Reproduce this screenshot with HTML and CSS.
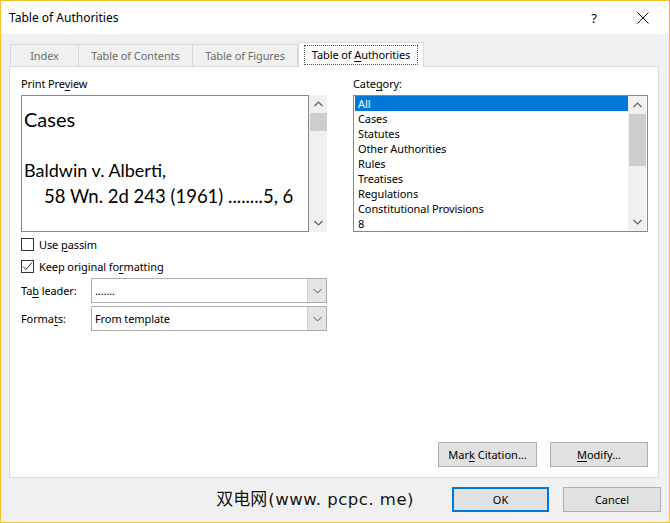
FILE: index.html
```html
<!DOCTYPE html>
<html lang="en">
<head>
    <meta charset="UTF-8">
    <title>Table of Authorities</title>
    <link rel="stylesheet" href="styles.css">
</head>
<body>
    <div class="window">
        <div class="titlebar">
            <span class="title">Table of Authorities</span>
            <span class="help">?</span>
            <span class="close">
                <svg width="12" height="12" viewBox="0 0 12 12"><path d="M0.5 0.5 L11.5 11.5 M11.5 0.5 L0.5 11.5" stroke="#111" stroke-width="1"/></svg>
            </span>
        </div>

        <div class="content">
            <div class="tabs">
                <div class="tab tab-index">Index</div>
                <div class="tab tab-toc">Table of Contents</div>
                <div class="tab tab-tof">Table of Figures</div>
                <div class="tab tab-active"><span class="focus">Table of <u>A</u>uthorities</span></div>
            </div>

            <div class="panel">
                <div class="columns">
                    <div class="left">
                        <div class="label">Print Pre<u>v</u>iew</div>
                        <div class="preview-row">
                            <div class="preview">
                                <div class="pv-head">Cases</div>
                                <div class="pv-case">Baldwin v. Alberti,</div>
                                <div class="pv-cite">58 Wn. 2d 243 (1961) ........5, 6</div>
                            </div>
                            <div class="scrollbar">
                                <svg class="arrow" width="9" height="6" viewBox="0 0 9 6"><path d="M0.5 5 L4.5 1 L8.5 5" fill="none" stroke="#606060" stroke-width="1.2"/></svg>
                                <div class="thumb thumb-preview"></div>
                                <div class="spacer"></div>
                                <svg class="arrow" width="9" height="6" viewBox="0 0 9 6"><path d="M0.5 1 L4.5 5 L8.5 1" fill="none" stroke="#606060" stroke-width="1.2"/></svg>
                            </div>
                        </div>

                        <label class="check">
                            <span class="box"></span>
                            <span>Use <u>p</u>assim</span>
                        </label>
                        <label class="check check-two">
                            <span class="box">
                                <svg width="11" height="11" viewBox="0 0 11 11"><path d="M1 5.5 L4 8.5 L10 1.5" fill="none" stroke="#222" stroke-width="1"/></svg>
                            </span>
                            <span>Keep original fo<u>r</u>matting</span>
                        </label>

                        <div class="field">
                            <span class="field-label">Ta<u>b</u> leader:</span>
                            <div class="combo">
                                <span class="combo-text">.......</span>
                                <span class="combo-btn"><svg width="9" height="6" viewBox="0 0 9 6"><path d="M0.5 1 L4.5 5 L8.5 1" fill="none" stroke="#505050" stroke-width="1"/></svg></span>
                            </div>
                        </div>
                        <div class="field field-two">
                            <span class="field-label">Forma<u>t</u>s:</span>
                            <div class="combo">
                                <span class="combo-text">From template</span>
                                <span class="combo-btn"><svg width="9" height="6" viewBox="0 0 9 6"><path d="M0.5 1 L4.5 5 L8.5 1" fill="none" stroke="#505050" stroke-width="1"/></svg></span>
                            </div>
                        </div>
                    </div>

                    <div class="right">
                        <div class="label">Cate<u>g</u>ory:</div>
                        <div class="listbox">
                            <div class="items">
                                <div class="item selected">All</div>
                                <div class="item">Cases</div>
                                <div class="item">Statutes</div>
                                <div class="item">Other Authorities</div>
                                <div class="item">Rules</div>
                                <div class="item">Treatises</div>
                                <div class="item">Regulations</div>
                                <div class="item">Constitutional Provisions</div>
                                <div class="item">8</div>
                            </div>
                            <div class="scrollbar list-scroll">
                                <svg class="arrow" width="9" height="6" viewBox="0 0 9 6"><path d="M0.5 5 L4.5 1 L8.5 5" fill="none" stroke="#606060" stroke-width="1.2"/></svg>
                                <div class="thumb thumb-list"></div>
                                <div class="spacer"></div>
                                <svg class="arrow" width="9" height="6" viewBox="0 0 9 6"><path d="M0.5 1 L4.5 5 L8.5 1" fill="none" stroke="#606060" stroke-width="1.2"/></svg>
                            </div>
                        </div>
                    </div>
                </div>

                <div class="panel-buttons">
                    <button class="btn btn-mark">Mar<u>k</u> Citation...</button>
                    <button class="btn btn-modify"><u>M</u>odify...</button>
                </div>
            </div>

            <div class="footer">
                <span class="watermark">双电网<span class="wm-latin">(www. pcpc. me)</span></span>
                <button class="btn btn-ok">OK</button>
                <button class="btn btn-cancel">Cancel</button>
            </div>
        </div>
    </div>
</body>
</html>
```

FILE: styles.css
```css
html, body {
    margin: 0;
    padding: 0;
}
body {
    font-family: "Noto Sans", "Liberation Sans", sans-serif;
    font-size: 11px;
    letter-spacing: -0.1px;
    color: #000;
    background: #f0f0f0;
}
u {
    text-decoration-thickness: 1px;
    text-underline-offset: 2px;
}
.window {
    width: 670px;
    height: 523px;
    box-sizing: border-box;
    border: 1px solid #f2c12e;
    background: #f0f0f0;
    display: flex;
    flex-direction: column;
}
.titlebar {
    height: 33px;
    background: #fff;
    display: flex;
    align-items: center;
    padding-left: 8px;
}
.title {
    font-size: 12px;
    letter-spacing: 0;
    flex: 1;
}
.help {
    font-size: 13px;
    width: 20px;
    margin-right: 33px;
    text-align: center;
}
.close {
    width: 12px;
    height: 12px;
    margin-right: 20px;
    display: flex;
}
.content {
    flex: 1;
    display: flex;
    flex-direction: column;
    padding: 8px 8px 0 8px;
}
.tabs {
    display: flex;
    align-items: flex-end;
    height: 24px;
    margin-left: 1px;
}
.tab {
    height: 22px;
    box-sizing: border-box;
    border: 1px solid #d9d9d9;
    border-bottom: none;
    border-right: none;
    color: #6d6d6d;
    display: flex;
    align-items: center;
    justify-content: center;
    padding-bottom: 1px;
}
.tab-index { width: 68px; }
.tab-toc { width: 114px; }
.tab-tof { width: 106px; border-right: 1px solid #d9d9d9; }
.tab-active {
    width: 126px;
    height: 25px;
    margin-bottom: -1px;
    background: #fff;
    color: #000;
    border-right: 1px solid #d9d9d9;
    position: relative;
    z-index: 1;
    padding-bottom: 1px;
}
.focus {
    border: 1px dotted #555;
    padding: 1px 7px 2px 7px;
}
.panel {
    height: 412px;
    margin-right: 2px;
    box-sizing: border-box;
    border: 1px solid #d9d9d9;
    background: #fff;
    padding: 10px 10px 10px 11px;
    display: flex;
    flex-direction: column;
}
.columns {
    display: flex;
    flex: 1;
}
.left {
    width: 306px;
}
.right {
    width: 296px;
    margin-left: 26px;
}
.label {
    height: 18px;
    line-height: 14px;
}
.preview-row {
    display: flex;
    height: 137px;
}
.preview {
    width: 288px;
    box-sizing: border-box;
    border: 1px solid #828790;
    font-family: "Lato", "Open Sans", sans-serif;
    font-size: 18px;
    letter-spacing: 0;
    padding: 11px 0 0 2px;
}
.pv-head {
    line-height: 25px;
    font-size: 20px;
}
.pv-case {
    margin-top: 25px;
    line-height: 26px;
}
.pv-cite {
    padding-left: 20px;
    line-height: 26px;
    font-size: 18.5px;
}
.scrollbar {
    width: 18px;
    background: #f0f0f0;
    display: flex;
    flex-direction: column;
    align-items: center;
}
.arrow {
    margin: 6px 0;
}
.thumb {
    width: 17px;
    background: #cdcdcd;
}
.thumb-preview {
    height: 18px;
}
.thumb-list {
    height: 52px;
}
.spacer {
    flex: 1;
}
.check {
    display: flex;
    align-items: center;
    height: 13px;
    margin-top: 6px;
}
.check-two {
    margin-top: 9px;
}
.box {
    width: 13px;
    height: 13px;
    box-sizing: border-box;
    border: 1px solid #333;
    margin-right: 5px;
    display: flex;
    align-items: center;
    justify-content: center;
}
.field {
    display: flex;
    align-items: center;
    margin-top: 5px;
}
.field-two {
    margin-top: 3px;
}
.field-label {
    width: 70px;
}
.combo {
    width: 236px;
    height: 25px;
    box-sizing: border-box;
    border: 1px solid #adadad;
    display: flex;
    align-items: center;
}
.combo-text {
    flex: 1;
    padding-left: 3px;
}
.combo-btn {
    width: 18px;
    height: 23px;
    background: #e5e5e5;
    border-left: 1px solid #cfcfcf;
    display: flex;
    align-items: center;
    justify-content: center;
}
.listbox {
    height: 137px;
    box-sizing: border-box;
    border: 1px solid #828790;
    display: flex;
    padding: 0 1px;
}
.items {
    flex: 1;
    overflow: hidden;
}
.item {
    height: 15px;
    line-height: 15px;
    padding-left: 3px;
}
.selected {
    background: #0078d7;
    color: #fff;
}
.list-scroll {
    width: 18px;
}
.panel-buttons {
    display: flex;
    justify-content: flex-end;
    gap: 13px;
}
.btn {
    font-family: "Noto Sans", "Liberation Sans", sans-serif;
    font-size: 11px;
    color: #000;
    background: #e1e1e1;
    border: 1px solid #adadad;
    height: 25px;
    padding: 0;
    margin: 0;
}
.btn-mark { width: 99px; }
.btn-modify { width: 98px; }
.footer {
    flex: 1;
    display: flex;
    align-items: center;
    justify-content: flex-end;
    padding-bottom: 2px;
}
.btn-ok {
    width: 97px;
    border: 2px solid #0078d7;
    margin-right: 14px;
}
.btn-cancel {
    width: 98px;
}
.watermark {
    font-family: "Noto Sans CJK SC", sans-serif;
    font-size: 17px;
    color: #111;
    margin-right: 38px;
    margin-bottom: 4px;
    letter-spacing: 0;
    text-shadow: 0 0 2px #fff;
}
.wm-latin {
    font-family: "DejaVu Sans", sans-serif;
    font-size: 16.5px;
    letter-spacing: 0.5px;
    margin-left: 1px;
}
```
